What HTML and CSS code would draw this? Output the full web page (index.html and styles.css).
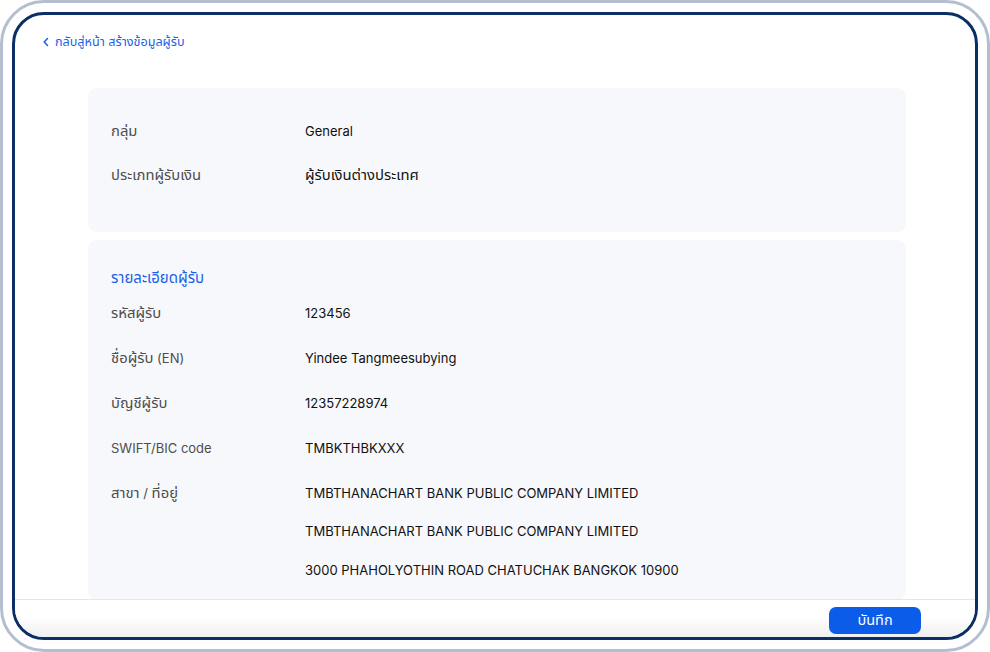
FILE: index.html
```html
<!DOCTYPE html>
<html lang="th">
<head>
<meta charset="utf-8">
<title>สร้างข้อมูลผู้รับ</title>
<link rel="stylesheet" href="styles.css">
</head>
<body>
<div class="device">
  <div class="screen">
    <header class="topbar">
      <a class="back" href="#">
        <svg class="chev" width="8" height="10" viewBox="0 0 8 10"><polyline points="5.5,1.5 2.2,5 5.5,8.5" fill="none" stroke="currentColor" stroke-width="1.5" stroke-linecap="round" stroke-linejoin="round"/></svg>
        <span class="th">กลับสู่หน้า สร้างข้อมูลผู้รับ</span>
      </a>
    </header>
    <main class="content">
      <section class="card card-top">
        <div class="row"><div class="label"><span class="th">กลุ่ม</span></div><div class="value">General</div></div>
        <div class="row"><div class="label"><span class="th">ประเภทผู้รับเงิน</span></div><div class="value"><span class="th">ผู้รับเงินต่างประเทศ</span></div></div>
      </section>
      <section class="card card-detail">
        <h2 class="card-title"><span class="th">รายละเอียดผู้รับ</span></h2>
        <div class="row"><div class="label"><span class="th">รหัสผู้รับ</span></div><div class="value">123456</div></div>
        <div class="row"><div class="label"><span class="th">ชื่อผู้รับ</span> (EN)</div><div class="value">Yindee Tangmeesubying</div></div>
        <div class="row"><div class="label"><span class="th">บัญชีผู้รับ</span></div><div class="value">12357228974</div></div>
        <div class="row"><div class="label">SWIFT/BIC code</div><div class="value">TMBKTHBKXXX</div></div>
        <div class="row row-multi">
          <div class="label"><span class="th">สาขา</span> / <span class="th">ที่อยู่</span></div>
          <div class="values">
            <div class="value">TMBTHANACHART BANK PUBLIC COMPANY LIMITED</div>
            <div class="value">TMBTHANACHART BANK PUBLIC COMPANY LIMITED</div>
            <div class="value">3000 PHAHOLYOTHIN ROAD CHATUCHAK BANGKOK 10900</div>
          </div>
        </div>
      </section>
    </main>
    <footer class="footer">
      <button class="btn-save" type="button"><span class="th">บันทึก</span></button>
    </footer>
  </div>
</div>
</body>
</html>
```

FILE: styles.css
```css
* { box-sizing: border-box; }
html, body { margin: 0; padding: 0; background: #ffffff; }
body {
  font-family: "Inter", "Noto Sans Thai", "Noto Sans Thai Looped", "Noto Sans", sans-serif;
  width: 990px;
  height: 652px;
  overflow: hidden;
}
.th { font-size: 1.14em; line-height: 1; }
.device {
  width: 990px;
  height: 652px;
  border: 3px solid #b3bfd0;
  border-radius: 44px;
  padding: 9px 9px 9px 9px;
  background: #ffffff;
}
.screen {
  height: 100%;
  border: 3px solid #0a2e65;
  border-radius: 32px;
  overflow: hidden;
  display: flex;
  flex-direction: column;
  background: #ffffff;
}
.topbar {
  height: 73px;
  flex: none;
  padding: 16px 0 0 27px;
}
.back {
  display: inline-flex;
  align-items: center;
  gap: 5px;
  color: #1c5fe8;
  text-decoration: none;
  font-size: 12px;
  line-height: 18px;
}
.back .th { font-size: 12.6px; }
.chev { display: block; }
.content {
  flex: 1;
  overflow: hidden;
  padding: 0 69px 0 73px;
  display: flex;
  flex-direction: column;
  gap: 8px;
}
.card {
  background: #f7f8fc;
  border-radius: 9px;
  padding: 0 23px;
  flex: none;
}
.card-top { padding-top: 21px; padding-bottom: 35px; }
.card-detail { padding-top: 28px; padding-bottom: 20px; }
.card-title {
  margin: 0 0 2px;
  font-size: 13px;
  line-height: 20px;
  height: 20px;
  font-weight: 400;
  color: #1c5fe8;
}
.card-title .th { font-size: 15px; }
.row {
  display: flex;
  align-items: center;
  height: 44px;
  font-size: 13px;
  line-height: 20px;
}
.card-detail .row { height: 45px; }
.card-detail .row.row-multi {
  height: auto;
  align-items: flex-start;
  padding-top: 12.5px;
}
.label {
  width: 194px;
  flex: none;
  color: #4d4d4d;
  height: 20px;
}
.value {
  color: #111111;
  font-weight: 400;
  height: 20px;
}
.values {
  display: flex;
  flex-direction: column;
  gap: 18.5px;
}
.footer {
  flex: none;
  height: 38px;
  border-top: 1px solid #e4e6ea;
  background: linear-gradient(#ffffff 0%, #ffffff 45%, #efefef 100%);
  display: flex;
  justify-content: flex-end;
  align-items: flex-start;
  padding: 7px 54px 0 0;
}
.btn-save {
  width: 92px;
  height: 27px;
  border: none;
  border-radius: 7px;
  background: #0b5ce8;
  color: #ffffff;
  font-family: inherit;
  font-size: 13px;
  line-height: 27px;
  padding: 0;
}
.btn-save .th { font-size: 14.5px; }
```
